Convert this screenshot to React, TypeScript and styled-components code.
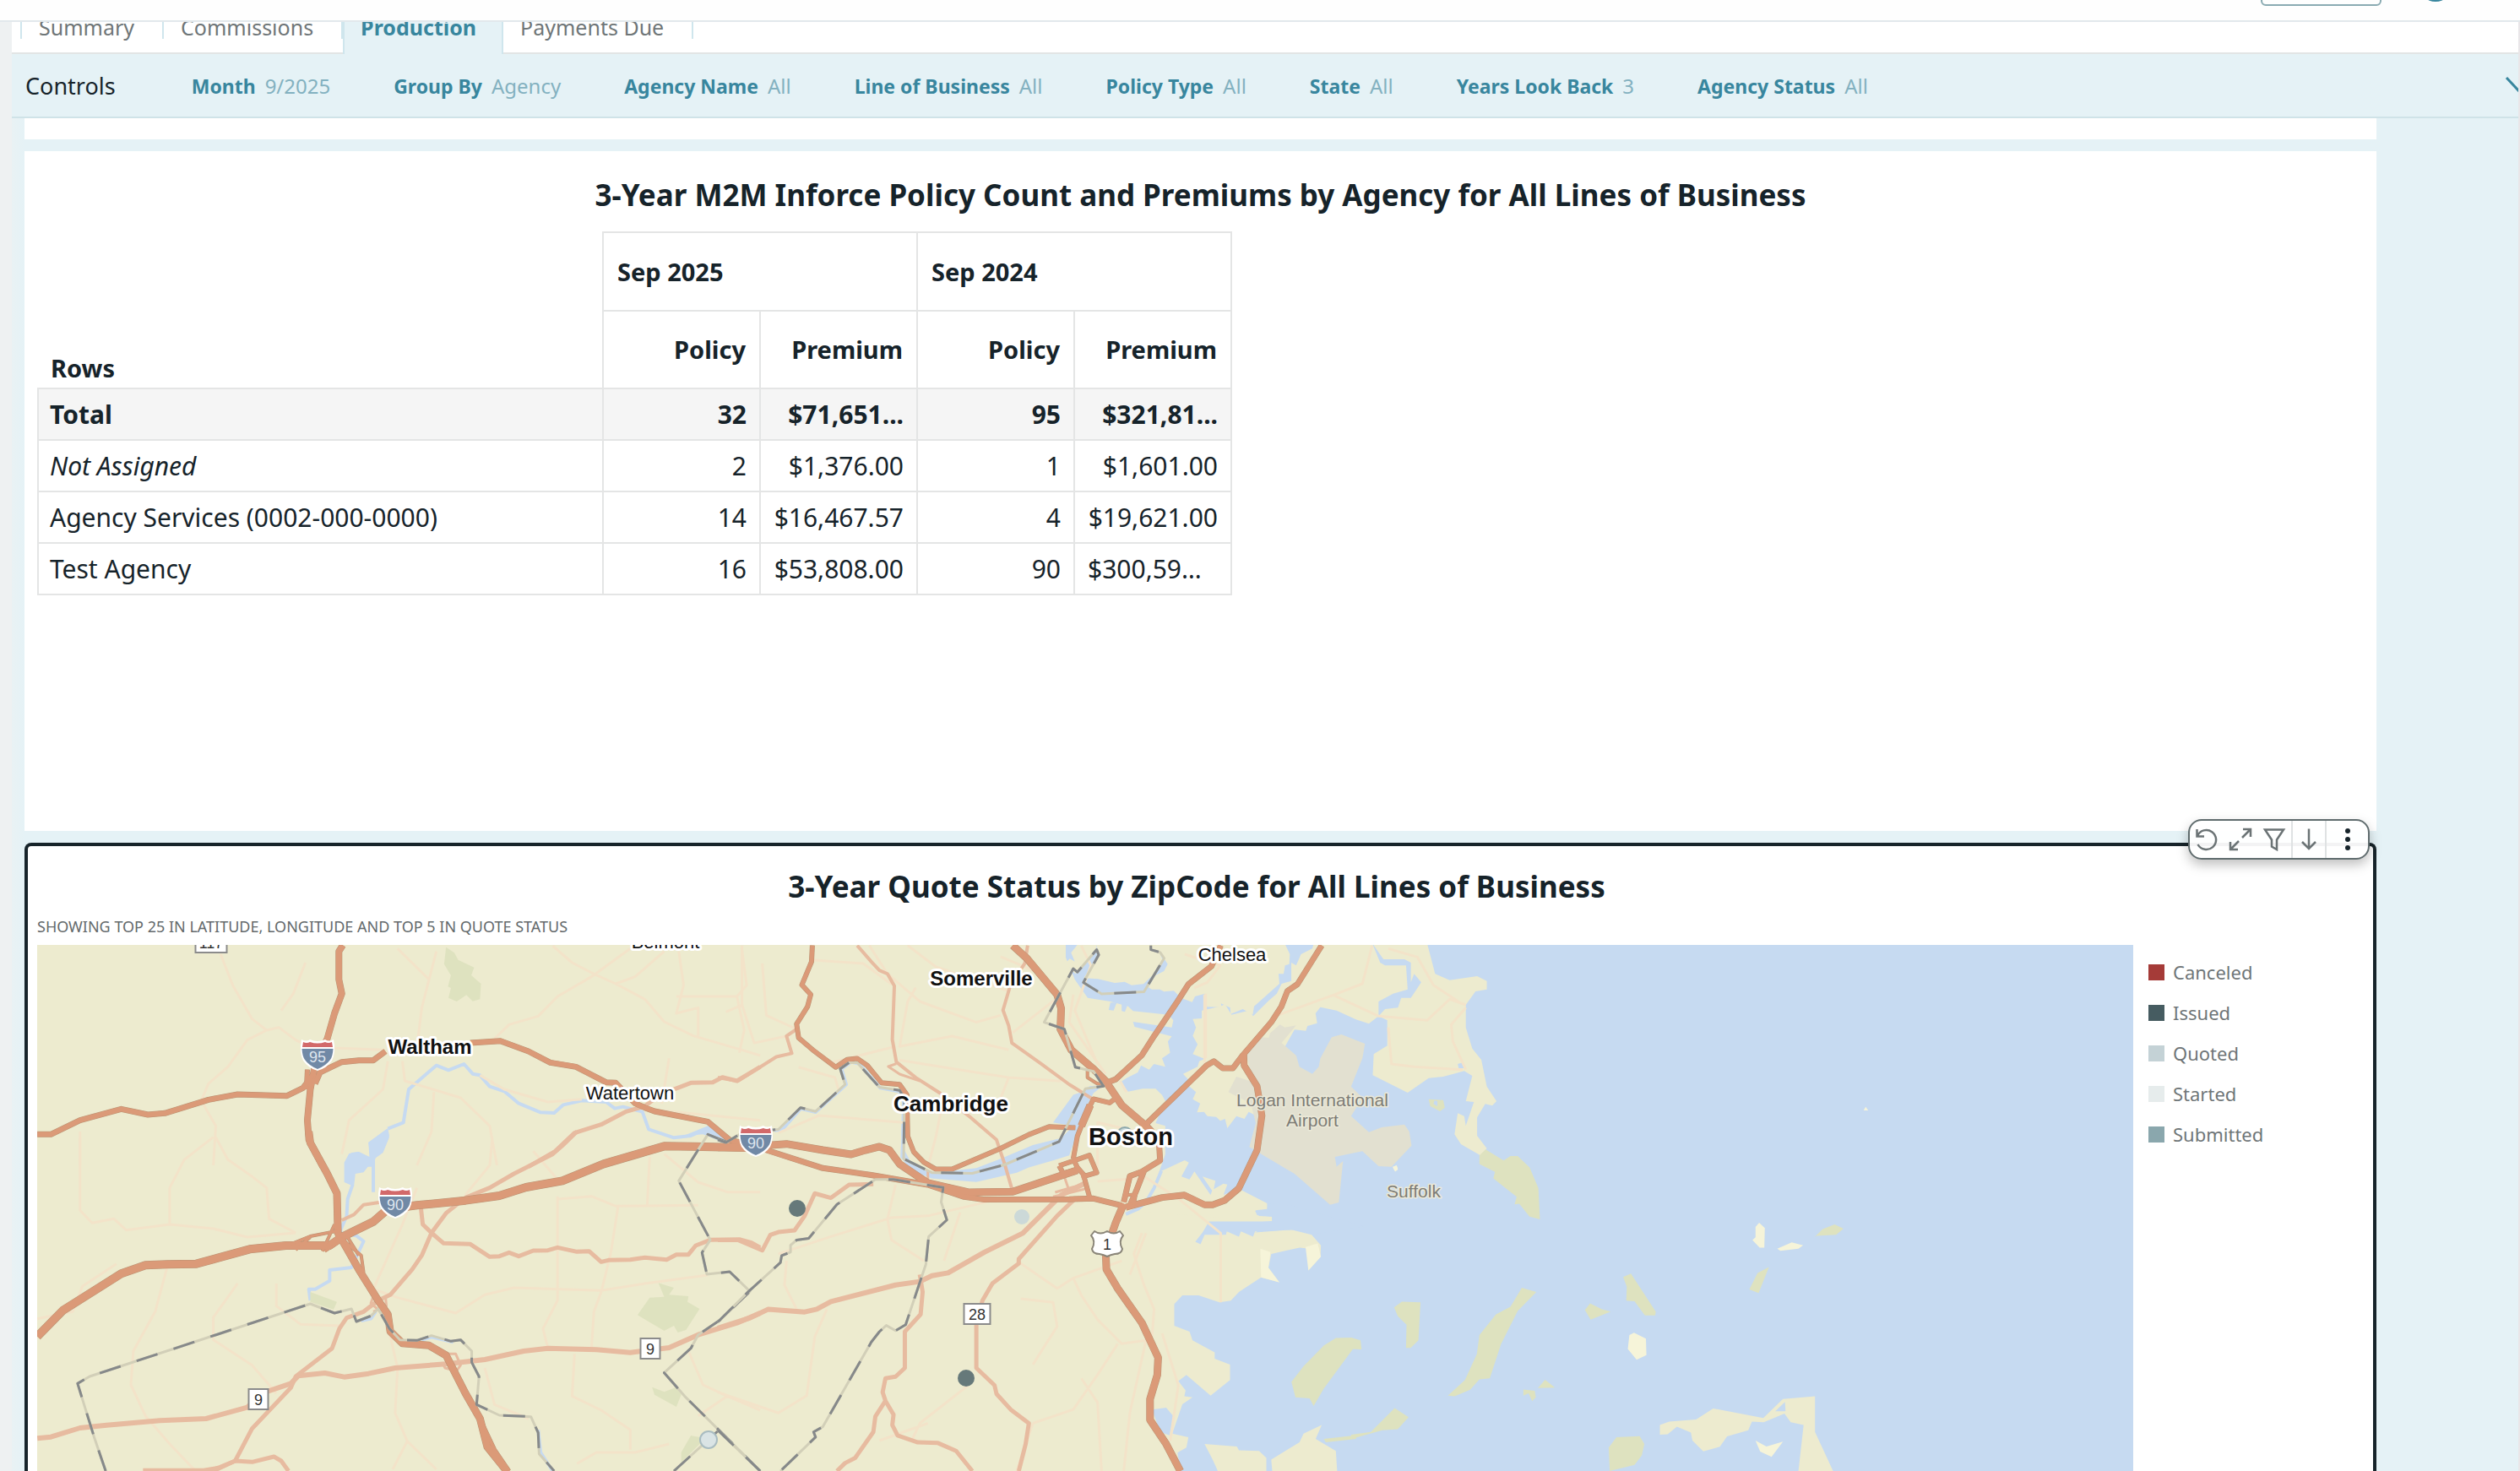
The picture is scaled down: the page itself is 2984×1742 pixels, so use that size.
import React from 'react';
import styled, { createGlobalStyle, css } from 'styled-components';

const ink = '#16232a';
const teal = '#38869e';
const muted = '#6f7678';
const canvas = '#e5f2f6';
const rule = '#e4e5e5';

const GlobalStyle = createGlobalStyle`
  * { box-sizing: border-box; }
  body { margin: 0; background: #fff; overflow: hidden; }
  button { font: inherit; color: inherit; background: none; border: 0; padding: 0; cursor: pointer; }
`;

const Page = styled.div`
  height: 100vh;
  display: flex;
  flex-direction: column;
  overflow: hidden;
  color: ${ink};
  font-family: 'Noto Sans', 'Open Sans', sans-serif;
`;

const TopBar = styled.header`
  flex: none;
  height: 26px;
  display: flex;
  align-items: flex-end;
  justify-content: flex-end;
  gap: 44px;
  padding: 0 80px 17px 0;
  border-bottom: 2px solid #e2e8ec;
  background: #fefefe;
  overflow: hidden;
`;

const TopButton = styled.button`
  width: 143px;
  height: 40px;
  border: 2px solid #8aabb2;
  border-radius: 6px;
`;

const Avatar = styled.span`
  width: 40px;
  height: 40px;
  margin-bottom: 5px;
  border-radius: 50%;
  background: ${teal};
`;

const Frame = styled.div`
  flex: 1;
  min-height: 0;
  display: flex;
  border-right: 2px solid #e9e6e8;
`;

const Rail = styled.div`
  flex: none;
  width: 14px;
  background: #eef1f2;
`;

const Sheet = styled.div`
  flex: 1;
  min-width: 0;
  display: flex;
  flex-direction: column;
`;

const Tabs = styled.nav`
  flex: none;
  height: 38px;
  display: flex;
  align-items: flex-end;
  padding-left: 10px;
  background: linear-gradient(#e2e5e5, #e2e5e5) bottom / 100% 2px no-repeat #fff;
  overflow: hidden;
`;

const Tab = styled.button<{ $active?: boolean; $first?: boolean }>`
  flex: none;
  height: 60px;
  padding: 0 35px 17px 20px;
  display: flex;
  align-items: flex-end;
  font-size: 25px;
  line-height: 30px;
  color: ${muted};
  background: linear-gradient(#cfe6ed, #cfe6ed) right 0 top 0 / 2px 42px no-repeat;
  ${p => p.$first && css`
    border-left: 2px solid transparent;
    border-image: linear-gradient(#cfe6ed 42px, transparent 42px) 1;
    border-width: 0 0 0 2px;
  `}
  ${p => p.$active && css`
    font-weight: 700;
    color: ${teal};
    background: ${canvas};
    border-right: 2px solid #cfe6ed;
    border-left: 2px solid #cfe6ed;
    padding-right: 30px;
    padding-left: 19px;
  `}
`;

const Controls = styled.section`
  flex: none;
  height: 76px;
  display: flex;
  align-items: center;
  gap: 75px;
  padding: 2px 0 0 16px;
  background: ${canvas};
  border-bottom: 2px solid #cfe3e8;
  overflow: hidden;
  position: relative;
`;

const ControlsTitle = styled.h2`
  margin: 0 15px 0 0;
  font-size: 27px;
  font-weight: 400;
  line-height: 36px;
`;

const ControlButton = styled.button`
  display: flex;
  align-items: baseline;
  gap: 11px;
  font-size: 24px;
  line-height: 32px;
  color: #83b1c0;
  white-space: nowrap;
`;

const ControlName = styled.strong`
  font-size: 23px;
  font-weight: 700;
  color: ${teal};
`;

const Collapse = styled.button`
  position: absolute;
  right: -16px;
  top: 24px;
  width: 32px;
  height: 24px;
  svg { display: block; }
`;

const Board = styled.main`
  flex: 1;
  min-height: 0;
  display: flex;
  flex-direction: column;
  gap: 14px;
  padding: 0 168px 0 15px;
  background: linear-gradient(90deg, #e9f2f4, ${canvas} 15px);
`;

const CardTail = styled.div`
  flex: none;
  height: 25px;
  background: #fff;
`;

const Card = styled.section`
  flex: none;
  height: 805px;
  padding: 27px 15px 0;
  background: #fff;
`;

const MapCard = styled.section`
  flex: 1;
  min-height: 0;
  display: flex;
  flex-direction: column;
  position: relative;
  padding: 23px 0 0 11px;
  background: #fff;
  border: 4px solid #17242a;
  border-bottom: 0;
  border-radius: 8px 8px 0 0;
`;

const CardTitle = styled.h1`
  margin: 0;
  font-size: 35px;
  font-weight: 700;
  line-height: 50px;
  text-align: center;
`;

const MapTitle = styled(CardTitle)`
  padding-right: 20px;
`;

const Pivot = styled.table`
  width: 1415px;
  margin-top: 18px;
  table-layout: fixed;
  border-collapse: collapse;
  font-size: 30px;
`;

const NameCol = styled.col` width: 669px; `;

const GroupHead = styled.th`
  height: 93px;
  padding: 0 16px;
  border: 2px solid ${rule};
  font-size: 29px;
  line-height: 40px;
  text-align: left;
`;

const ValueHead = styled(GroupHead)`
  height: 92px;
  text-align: right;
`;

const CornerHead = styled.th`
  padding: 0 15px 3px;
  vertical-align: bottom;
  font-size: 29px;
  line-height: 40px;
  text-align: left;
`;

const RowHead = styled.th<{ $kind?: string }>`
  height: 61px;
  padding: 0 13px;
  border: 2px solid ${rule};
  font-weight: ${p => (p.$kind === 'total' ? 700 : 400)};
  font-style: ${p => (p.$kind === 'empty' ? 'italic' : 'normal')};
  text-align: left;
  line-height: 40px;
`;

const Value = styled.td<{ $left?: boolean }>`
  padding: 0 15px;
  border: 2px solid ${rule};
  text-align: ${p => (p.$left ? 'left' : 'right')};
  line-height: 40px;
  white-space: nowrap;
`;

const PivotRow = styled.tr<{ $kind?: string }>`
  ${p => p.$kind === 'total' && css`
    font-weight: 700;
    background: #f5f5f5;
  `}
`;

const Note = styled.p`
  margin: 9px 0;
  font-size: 18px;
  line-height: 26px;
  color: #63696b;
`;

const MapRow = styled.div`
  flex: 1;
  min-height: 0;
  display: flex;
`;

const MapView = styled.svg`
  flex: 1;
  min-width: 0;
  height: 100%;
  display: block;
  path { vector-effect: non-scaling-stroke; stroke-linejoin: round; }
`;

const Legend = styled.ul`
  flex: none;
  width: 284px;
  margin: 0;
  padding: 8px 0 0 18px;
  list-style: none;
`;

const LegendItem = styled.li`
  height: 48px;
  display: flex;
  align-items: center;
  gap: 10px;
  font-size: 22px;
  line-height: 30px;
  color: ${muted};
`;

const Swatch = styled.span<{ $color: string }>`
  width: 19px;
  height: 19px;
  background: ${p => p.$color};
`;

const Toolbar = styled.div`
  position: absolute;
  top: -32px;
  right: 4px;
  height: 48px;
  display: flex;
  background: #fffffff2;
  border: 2px solid #5f6b6d;
  border-radius: 16px;
  box-shadow: 0 6px 14px #00000040;
`;

const ToolButton = styled.button<{ $wide?: boolean; $ruled?: boolean }>`
  width: ${p => (p.$wide ? 51 : 40)}px;
  display: flex;
  align-items: center;
  justify-content: center;
  border-left: ${p => (p.$ruled ? '2px solid #dfe2e3' : '0')};
  color: #6b7375;
`;

/* ---- map drawing ---- */

const Land = styled.path` fill: #edebcf; `;
const Sand = styled.path` fill: #f6f4d9; `;
const Water = styled.path` fill: #c6daf1; `;
const Airport = styled.path` fill: #e2e0d0; `;
const Park = styled.path` fill: #dee2bf; `;
const Stream = styled.path` fill: none; stroke: #c6daf1; stroke-width: 4px; `;
const Street = styled.path` fill: none; stroke: #f3e3c9; stroke-width: 3px; `;
const Secondary = styled.path<{ $w?: number }>` fill: none; stroke: #e7bba0; stroke-width: ${p => p.$w ?? 5}px; `;
const Casing = styled.path<{ $w: number }>` fill: none; stroke: #b99273; stroke-width: ${p => p.$w + 1}px; `;
const Highway = styled.path<{ $w: number }>` fill: none; stroke: #db9a78; stroke-width: ${p => p.$w}px; `;
const BorderBase = styled.path` fill: none; stroke: #d2cfb8; stroke-width: 3px; `;
const BorderDash = styled.path` fill: none; stroke: #86898a; stroke-width: 3px; stroke-dasharray: 26 20; `;

const Place = styled.text<{ $size: number; $bold?: boolean }>`
  font-family: 'Liberation Sans', Arial, sans-serif;
  font-size: ${p => p.$size}px;
  font-weight: ${p => (p.$bold ? 700 : 400)};
  text-anchor: middle;
  fill: #111;
  stroke: #fff;
  stroke-width: 6px;
  stroke-linejoin: round;
  paint-order: stroke;
`;

const SoftPlace = styled(Place)`
  fill: #7d7c76;
  stroke: #ebe9d8;
  stroke-width: 3px;
`;

const SignText = styled.text<{ $light?: boolean }>`
  font-family: 'Liberation Sans', Arial, sans-serif;
  font-size: 18px;
  text-anchor: middle;
  fill: ${p => (p.$light ? '#dfe6ef' : '#333')};
`;

const west = 'translate(0 980) scale(0.5741 0.33333)';
const southWest = 'translate(0 1340) scale(0.5741 0.33333)';
const centre = 'translate(850 1100) scale(0.47831 0.40945)';
const harbor = 'translate(1200 1100) scale(0.38265 0.33333)';
const mystic = 'translate(1240 1110) scale(0.33333)';
const east = 'translate(1600 1100) scale(0.61224 0.40945)';

type Line = { at: string; d: string; w: number };

const secondaries: Line[] = [
  { at: west, w: 5, d: 'M1090,1205L1145,1150L1185,1085L1240,1055L1290,1010L1330,990L1360,950L1425,907L1470,905L1490,887L1520,900L1568,850' },
  { at: southWest, w: 5, d: 'M1190,0L1160,50L1140,80L1060,150L1010,200L960,235L920,290L890,360L870,440L850,490L830,530L805,580L780,600L750,640L715,662L700,700L685,770L610,870L600,910L520,1055L485,1170L440,1206' },
  { at: southWest, w: 6, d: 'M77,1090L105,1085L165,1053L220,1043L330,1027L425,1020L510,980L540,930L600,895L615,868L670,858L710,872L760,860L815,840L925,825L1000,810L1080,780L1130,770L1230,775L1300,785L1380,768L1440,722L1520,680L1568,645' },
  { at: southWest, w: 5, d: 'M868,270L872,330L890,360L915,397L970,400L1010,445L1030,443L1050,430L1070,443L1100,423L1130,422L1150,412L1190,427L1215,425L1240,463L1255,457L1300,455L1330,448L1375,455L1395,437L1420,437L1435,405L1465,385L1525,383L1550,395L1568,412' },
  { at: southWest, w: 4, d: 'M705,315L730,295L750,260L790,250' },
  { at: southWest, w: 5, d: 'M295,1204L420,1204L450,1195L485,1170L520,1174L565,1155L580,1170L595,1206' },
  { at: southWest, w: 3, d: 'M770,585L765,610L785,640M795,585L797,620L770,640M925,790L940,790L950,830L940,855M912,820L918,840L940,850' },
  { at: centre, w: 4, d: 'M345,48L380,95L400,120L420,130L437,165L432,320L442,385L490,430L550,475L620,540L690,610L710,680L730,760' },
  { at: centre, w: 3, d: 'M442,390L422,398L450,420L500,440' },
  { at: centre, w: 4, d: 'M767,48L760,100L725,160L706,235L720,280L728,330L800,390L870,450L925,490' },
  { at: centre, w: 4, d: 'M0,430L50,440L145,370L183,360L170,310L195,290' },
  { at: centre, w: 5, d: 'M0,900L50,900L110,930L130,885L150,877L190,872L215,830L240,765L280,778L325,740L385,738' },
  { at: centre, w: 6, d: 'M0,1155L80,1125L125,1100L215,1108L245,1100L280,1078L440,1030L500,1020L530,1003L570,995L660,935L755,880L850,770L910,735' },
  { at: centre, w: 5, d: 'M885,780L840,830L745,955L745,968L680,1025L655,1075L652,1090' },
  { at: centre, w: 5, d: 'M640,1145L640,1270L685,1320L690,1345L725,1390L770,1430L762,1490L745,1568' },
  { at: centre, w: 5, d: 'M500,1000L507,1050L502,1115L463,1165L463,1270L440,1295L415,1300L408,1340L415,1365L435,1405L432,1435L445,1465L495,1485L545,1487L590,1510L630,1568' },
  { at: centre, w: 5, d: 'M415,1365L390,1410L385,1455L340,1530L315,1545L295,1568' },
  { at: centre, w: 3, d: 'M850,690L872,765M835,762L905,738M830,775L910,752M520,700L520,735' },
];

const highways: Line[] = [
  { at: west, w: 7, d: 'M707,418L699,440L699,540L705,590L690,660L675,750L650,840L640,930L634,1040L637,1110L666,1205' },
  { at: west, w: 5, d: 'M632,930L634,860' },
  { at: west, w: 6, d: 'M77,1090L105,1090L165,1040L250,1000L305,1020L340,1015L430,967L490,948L592,953L625,925L645,880' },
  { at: west, w: 6, d: 'M650,910L660,870L705,833L740,827L770,827L795,795' },
  { at: west, w: 6, d: 'M970,765L1032,758L1090,795L1135,835L1188,850L1250,905L1270,907L1310,980L1330,995L1350,1008L1460,1045L1505,1110L1530,1120' },
  { at: southWest, w: 9, d: 'M77,728L130,635L250,505L300,475L345,472L405,470L515,418L590,405L680,405L705,375L770,320L800,275L860,262L960,245L1030,228L1085,198L1160,175L1245,115L1370,52L1430,53L1530,57L1568,57' },
  { at: southWest, w: 8, d: 'M637,0L640,40L675,150L695,220L697,360L740,490L780,600L800,650L805,710L830,752L885,760L920,795L960,930L990,1020L1005,1120L1045,1206' },
  { at: southWest, w: 4, d: 'M990,1020L1020,1130L1050,1206' },
  { at: southWest, w: 3, d: 'M600,400L640,372L700,352M610,420L640,375M665,425L690,330M670,425L710,380M700,375L745,440L750,500M715,370L740,440' },
  { at: centre, w: 5, d: 'M234,48L232,95L208,162L230,190L222,225L195,275L200,315L235,350L292,400L320,378L345,375L370,395L405,445L450,450L468,480L470,600L485,645L510,675L540,695L580,695L640,665L700,635L770,595L820,572L885,575' },
  { at: centre, w: 8, d: 'M730,48L765,85L840,190L850,230L848,290L875,350L930,405L960,440L1000,510L1060,570L1092,610' },
  { at: centre, w: 6, d: 'M1060,570L1092,615L1095,670L1050,702L1020,715L1005,790M1055,700L1035,760L1020,800' },
  { at: centre, w: 8, d: 'M1005,795L985,850L970,900L960,930L962,985L990,1040L1050,1140L1090,1240L1088,1290L1070,1360L1070,1420L1110,1490L1145,1568' },
  { at: centre, w: 6, d: 'M1245,48L1222,108L1165,160L1135,215L1080,310L1050,365L985,435L962,445' },
  { at: centre, w: 6, d: 'M1495,48L1435,160L1410,180L1395,225L1370,270L1300,365L1275,403L1250,403L1228,383L1210,395L1060,565' },
  { at: centre, w: 7, d: 'M1302,360L1303,395L1335,455L1347,540L1335,640L1290,750L1255,785L1225,798L1205,798L1155,770L1100,777L1010,805' },
  { at: centre, w: 8, d: 'M0,632L100,628L170,622L260,640L330,652L365,640L400,630L425,640L450,680L520,735L620,762L730,760L890,698' },
  { at: centre, w: 6, d: 'M100,632L260,692L380,712L520,740L610,775L660,783L870,782L930,780L1000,800' },
  { at: centre, w: 5, d: 'M985,490L970,503L930,492L918,520L900,570L890,600L880,665M845,685L920,655L938,705L900,718M880,665L890,690L905,710L920,775M845,685L855,707L895,695' },
  { at: centre, w: 8, d: 'M922,510L900,570' },
  { at: centre, w: 3, d: 'M915,410L915,430L940,448L965,445M1012,770L1035,768L1030,800' },
];

const borders: Line[] = [
  { at: southWest, w: 3, d: 'M218,1206L195,1090L160,895L185,870L640,612L690,645L725,630L735,675L765,655L780,630L803,700L825,740L860,742L890,725L930,745L950,740L973,780L973,820L988,870L983,970L1030,1008L1095,1013L1110,1070L1112,1145L1143,1206' },
  { at: southWest, w: 3, d: 'M1500,38L1460,10L1400,175L1465,385L1448,430L1458,507L1505,498L1547,568L1485,670L1440,722L1425,770L1370,857L1412,940L1568,1206' },
  { at: southWest, w: 3, d: 'M1390,1206L1480,1065' },
  { at: centre, w: 3, d: 'M0,1450L105,1568' },
  { at: centre, w: 3, d: 'M0,1137L75,1050L155,965L158,945L180,935L180,915L195,900L225,895L295,797L390,725L435,725L558,748L553,790L567,842L522,890L515,970L465,1145L440,1162L417,1147L400,1165L380,1195L260,1440L237,1455L242,1470L155,1568' },
  { at: centre, w: 3, d: 'M0,610L20,618L60,590L150,580L205,517L242,528L315,450L303,405L325,387L345,387L400,458L450,467L462,490L460,665L530,705L630,707L710,682L845,615L910,462L955,455L930,412L885,400L858,290L808,270L880,115L890,125L938,60L943,75L905,155L950,188L1055,182L1105,85L1095,68L1072,60L1072,48' },
];

const streets: { at: string; d: string }[] = [
  { at: west, d: 'M455,450L480,560L520,680L550,720L575,710L610,755L640,780L790,790M630,480L605,590L580,650M550,720L510,755L470,850L430,910L415,970L445,1060L440,1200M820,430L885,540L870,640L860,780M900,440L885,540M1020,750L1050,700L1110,670L1150,600L1220,530L1300,430M1140,420L1180,480L1225,520L1270,555L1310,530L1370,440M1270,555L1330,610L1370,690L1430,740L1530,790L1568,810M1400,440L1410,560L1395,660L1440,640L1440,740M1395,600L1520,600L1540,560L1530,430M1520,600L1535,720L1525,800M800,830L790,930L720,1040L705,1160M830,830L835,900L950,960L1010,1060L1025,1200M895,940L890,1080L860,1200M990,880L1040,930L1130,975L1200,965M165,1080L165,1200M1380,820L1365,980M1330,1000L1568,1040' },
  { at: southWest, d: 'M165,20L165,280L190,325L235,310L260,350L350,330L440,345L510,375L610,360M445,20L470,100L520,160L550,200L555,310L610,360M440,20L380,100L350,200L350,330M345,480L320,640L275,780L270,900L300,1010L350,1110L400,1200M240,470L170,550L150,640L77,665M490,540L440,660L440,740L520,830L570,930M570,540L570,620L620,685L700,690M860,200L830,330L770,560L820,590L940,645L1000,580L1060,555L1240,565L1330,540L1460,510M1150,230L1150,430L1150,600L1120,700L1130,770M1150,240L1220,230L1270,265L1440,262M1275,265L1260,430L1240,570L1225,640L1220,770M1015,30L1010,120L960,225M1100,70L1150,170M1340,90L1335,260M1370,80L1440,180L1500,215L1568,215M1185,790L1180,940L1240,990L1300,1060L1300,1130M1420,780L1450,900L1500,940L1440,1010M1500,940L1568,990M800,690L820,840L815,1000L840,1100L810,1200M840,1100L900,1200M1000,840L1020,970L1090,1020M1380,1110L1310,1140L1230,1140L1190,1180' },
  { at: centre, d: 'M60,48L60,220L90,330L170,310M60,220L20,240M110,100L120,250L195,290M230,90L360,100L430,160M375,48L420,130L500,210L640,270L700,250M470,48L540,110L720,180M490,170L470,210L450,340L580,310L720,350M270,390L440,340M450,380L720,430L850,440M200,400L290,430L300,470M560,480L540,600L520,690M720,430L690,520L610,530M150,590L250,540L460,560M700,80L800,130L840,200L730,300M880,190L870,270L960,420M150,940L280,890L430,835L520,830L700,780M440,740L420,840L430,900L510,960M170,960L165,1030L195,1100M270,1100L240,1180L220,1350L150,1400L0,1340M600,820L560,960M740,960L840,1040L880,1010L1000,960M880,1010L900,1060L940,1130L1000,1200L1060,1190M750,1070L830,1080L840,1150L780,1260M990,1200L940,1290L880,1390L780,1430M620,1320L500,1430L480,1480M1050,880L1030,940L1055,1030L1080,1100L1075,1180M1060,1190L1020,1400L1005,1568M900,1300L940,1370L950,1568M780,1430L740,1568M1100,1170L1140,1320L1120,1480M1205,190L1205,400M940,730L1060,720L1140,780L1245,880L1245,1080M940,700L940,560L1090,600M1060,880L1020,1000M400,1480L520,1430' },
  { at: harbor, d: 'M810,310L990,235L1080,195L1110,60M990,235L1130,310L1280,325L1350,250L1400,270M1160,70L1250,100L1300,200L1380,260M1160,350L1170,480L1240,490L1390,500M1400,280L1355,340L1360,400L1400,500M595,230L595,460M530,90L640,130L600,190L560,210M210,60L240,130L190,290L260,480M330,540L350,580' },
];

function Shield({ x, y, label }: { x: number; y: number; label: string }) {
  return (
    <g transform={`translate(${x} ${y})`}>
      <path d="M-19,-17Q-13,-14 -9,-17Q0,-13 9,-17Q13,-14 19,-17Q22,-2 17,8Q11,17 0,20Q-11,17 -17,8Q-22,-2 -19,-17Z" fill="#fff" />
      <path d="M-17,-14Q-13,-12 -9,-14Q0,-11 9,-14Q13,-12 17,-14L18,-8H-18Z" fill="#d2696a" />
      <path d="M-18.500,-6H18.500Q18,3 15,7Q10,14 0,18Q-10,14 -15,7Q-18,3 -18.500,-6Z" fill="#7189a6" />
      <SignText $light y="10">{label}</SignText>
    </g>
  );
}

function RouteSign({ x, y, w, label }: { x: number; y: number; w: number; label: string }) {
  return (
    <g transform={`translate(${x} ${y})`}>
      <rect x={-w / 2} y="-12" width={w} height="24" fill="#fff" stroke="#8b8b8b" strokeWidth="2" />
      <SignText y="7">{label}</SignText>
    </g>
  );
}

function BostonMap() {
  return (
    <MapView viewBox="44 1119 2482 600" preserveAspectRatio="xMinYMin meet" role="img" aria-label="Quote status by zip code around Boston">
      <rect x="44" y="1119" width="2482" height="900" fill="#edebcf" />
      <rect x="1262" y="1119" width="1264" height="900" fill="#c6daf1" />

      <g transform={harbor}>
        {/* Charlestown and Boston */}
        <Land d="M-100,50L145,50L165,110L190,180L230,245L300,258L355,275L370,292L480,305L495,325L490,350L370,330L375,348L490,382L478,400L485,440L460,460L470,490L435,480L420,500L395,485L385,510L350,530L330,545L355,578L400,568L440,568L460,590L475,622L455,650L440,690L470,700L470,800L440,900L440,870L530,822L543,830L520,880L545,890L560,862L610,945L615,930L585,880L625,895L620,925L650,905L662,908L650,945L700,925L785,975L785,995L750,1000L760,1020L800,1022L800,1038L610,1040L570,1095L575,1120L600,1080L645,1072L650,1095L660,1075L700,1077L705,1095L720,1072L745,1072L748,1082L740,1150L480,1220L300,1990L-100,1990Z" />
        {/* piers in the channel */}
        <Water d="M300,262L320,262L310,290L295,288ZM335,262L355,265L345,295L335,292Z" />
        {/* East Boston */}
        <Land d="M555,320L583,318L583,290L640,275L655,268L675,305L728,290L742,310L790,255L815,230L830,195L860,185L860,120L875,130L890,90L925,70L930,50L1110,50L1135,120L1150,130L1215,130L1220,215L1175,230L1130,258L1130,310L1100,337L1060,322L1000,290L950,278L935,300L940,335L910,345L905,362L870,358L800,500L780,640L745,660L728,650L715,675L690,665L662,708L655,675L640,682L628,668L600,665L590,650L568,652L578,620L555,605L565,580L540,555L545,540L525,515L570,490L575,470L592,462L555,445L570,410L555,380L565,350Z" />
        {/* Winthrop and Deer Island */}
        <Land d="M1110,50L1280,50L1305,160L1350,182L1435,168L1465,185L1465,215L1430,222L1400,270L1400,350L1420,425L1448,465L1465,560L1495,612L1482,628L1460,622L1435,670L1435,735L1465,780L1445,805L1385,765L1365,730L1375,655L1395,665L1400,700L1425,615L1400,612L1420,522L1395,505L1330,525L1285,530L1220,582L1112,520L1115,445L1157,415L1157,325L1130,310L1150,285L1190,280L1200,245L1230,245L1262,190L1240,160L1230,190L1230,120L1210,108L1145,108Z" />
        <Water d="M1375,480L1390,475L1395,495L1378,495Z" />
        <Airport d="M765,385L790,387L795,370L825,340L840,350L875,343L830,405L875,450L885,490L925,515L945,490L950,460L985,385L1015,375L1088,408L1080,460L1045,560L1080,600L1045,665L1100,722L1140,705L1210,695L1225,720L1232,770L1170,845L1130,843L1080,790L995,810L1000,845L1020,825L1007,972L980,980L870,870L730,775L750,690L735,620L665,580L690,525L745,545L720,450Z" />
        <Park d="M1285,605L1330,608L1335,635L1320,648L1290,630Z" />
        <Water d="M1303,610L1312,612L1312,630L1300,622Z" />
        <Sand d="M1175,850L1185,840L1190,855L1182,862Z" />
      </g>

      <g transform={mystic}>
        {/* Everett and Chelsea */}
        <Land d="M112,20L175,20L175,45L100,130L84,112L65,92L80,76L98,86L85,55Z" />
        <Land d="M172,20L185,60L130,145L180,148L240,162L275,158L300,170L340,166L372,185L400,185L415,193L450,190L475,215L515,230L525,210L560,200L568,247L620,248L617,235L650,250L652,272L695,255L730,275L735,245L825,165L822,130L840,130L845,100L860,95L862,60L843,20Z" />
        <Water d="M398,52L415,75L428,95L415,120L385,135L352,190L340,168L380,130L412,85Z" />
      </g>

      <g transform={centre}>
        <Land d="M860,800L1380,848L1330,878L1420,870L1470,885L1493,915L1492,948L1462,988L1465,925L1440,922L1370,940L1363,980L1390,1022L1345,1008L1290,1050L1270,1075L1242,1080L1190,1060L1150,1060L1130,1085L1130,1148L1168,1165L1175,1190L1230,1225L1230,1243L1268,1260L1268,1305L1220,1350L1160,1290L1140,1308L1158,1335L1155,1352L1175,1355L1150,1375L1125,1460L1165,1470L1160,1500L1138,1515L1150,1600L860,1600Z" />
        <Sand d="M1343,925L1368,935L1363,980L1390,1022L1345,1008ZM1455,920L1485,910L1493,948L1462,988Z" />
        <Water d="M1182,905L1200,878L1216,846L1375,846L1372,832L1335,828L1330,815L1360,812L1365,795L1420,800L1600,860L1480,882L1430,870L1330,875L1325,890L1295,875L1290,890L1260,875L1258,885L1205,885L1195,912ZM1075,1390L1110,1385L1128,1410L1118,1465L1095,1455Z" />
        {/* Squantum */}
        <Land d="M1205,1490L1285,1497L1290,1508L1340,1510L1358,1530L1358,1600L1250,1600L1225,1535ZM1375,1600L1370,1535L1440,1485L1450,1460L1495,1435L1480,1475L1530,1510L1535,1600Z" />
        {/* Charles River */}
        <Water d="M456,560L462,640L480,680L540,705L640,692L700,665L780,625L850,605L880,570L895,480L920,455L955,452L930,475L910,520L890,590L870,655L830,670L770,690L740,705L640,732L530,722L480,700L452,660ZM830,560L880,480L905,470L880,570Z" />
        <Stream d="M140,583L160,580L205,520L242,530L318,450L306,405L330,385L350,390L402,460L450,470L460,500L458,600M1098,700L1080,750L1060,790L1040,810L1010,825" />
      </g>

      <g transform={west}>
        <Stream d="M800,1070L832,1048L843,930L900,845L925,862L957,840L975,875L990,880L1010,920L1040,937L1070,980L1115,1012L1143,1014L1162,985L1200,970L1250,975L1268,998L1285,992L1325,1010L1338,1072L1390,1102L1425,1095L1460,1068L1500,1120" />
        <Water d="M800,1068L803,1095L775,1170L770,1205L712,1205L725,1155L740,1152L762,1172L760,1118ZM1410,1095L1460,1060L1480,1085L1500,1125L1450,1090Z" />
        <Park d="M920,425L937,445L945,470L978,497L972,525L992,555L990,610L975,617L962,595L942,618L925,605L930,570L924,565L930,525L916,485Z" />
      </g>
      <g transform={southWest}>
        <Water d="M770,100L750,145L733,150L730,195L710,180L710,110L720,78L740,72L765,92L760,40L795,-5L803,20L790,75Z" />
        <Stream d="M727,190L717,240L715,300L700,360L735,370L750,390L725,483L680,492L680,530L650,560L637,560L640,600M770,90L770,215M745,672L765,665L775,640M870,740L890,730L935,748M1110,1060L1115,1140L1140,1206" />
        <Park d="M640,570L695,605L688,632L640,605ZM1358,538L1390,555L1380,580L1420,585L1418,605L1443,630L1415,705L1398,714L1390,690L1370,708L1315,652L1340,590L1370,587ZM1345,908L1370,925L1395,908L1405,935L1395,978L1350,935ZM1425,1080L1455,1090L1405,1175L1405,1140Z" />
      </g>

      <g transform={east}>
        <Park d="M260,638L295,670L308,657L322,657L345,690L362,750L365,840L345,832L325,795L316,797L320,775L275,722L278,703L248,680L248,655ZM83,1095L98,1078L134,1080L130,1190L115,1212L106,1212L107,1145L90,1120ZM0,1182L18,1190L20,1216L0,1215ZM330,1038L358,1050L322,1105L290,1200L268,1300L248,1303L230,1333L200,1352L187,1350L220,1305L243,1230L248,1175L280,1115L308,1093ZM452,1102L462,1083L485,1100L502,1107L463,1130ZM526,1007L541,997L589,1107L588,1118L568,1118L548,1077L532,1075L533,1035ZM786,995L808,978L788,1053L770,1043ZM895,893L912,868L935,855L952,867L938,885L900,888ZM375,1304L394,1327L361,1328ZM333,1332L355,1336L357,1355L350,1366L343,1343L333,1350ZM84,1386L111,1412L90,1447L60,1450L0,1475L0,1463L38,1455ZM513,1470L558,1467L567,1490L562,1523L548,1550L500,1568L498,1500Z" />
        <Sand d="M782,862L789,850L800,865L799,922L790,922L776,900L782,892ZM824,925L852,907L874,915L865,925L830,931ZM538,1175L547,1168L570,1185L571,1233L552,1246L535,1215ZM782,1480L803,1497L835,1483L813,1527L791,1512ZM991,525L995,515L1000,525ZM80,688L88,684L90,693L85,702Z" />
        <Land d="M597,1435L615,1425L667,1419L700,1387L797,1415L835,1360L897,1352L897,1455L932,1568L960,1640L860,1640L865,1568L875,1435L850,1427L838,1402L798,1427L775,1425L768,1450L727,1468L713,1498L681,1511L660,1480L657,1457L630,1440L612,1462L597,1463Z" />
        <Water d="M820,1395L839,1368L840,1395Z" />
      </g>
      <g transform={centre}>
        <Park d="M1500,1205L1530,1183L1568,1182L1585,1195L1500,1330L1475,1380L1465,1358L1430,1355L1420,1310L1450,1265ZM1500,1475L1580,1465L1580,1475L1505,1485Z" />
      </g>

      {streets.map((s, i) => <g key={i} transform={s.at}><Street d={s.d} /></g>)}
      {secondaries.map((s, i) => <g key={i} transform={s.at}><Secondary $w={s.w} d={s.d} /></g>)}
      {highways.map((s, i) => <g key={i} transform={s.at}><Casing $w={s.w} d={s.d} /></g>)}
      {highways.map((s, i) => <g key={i} transform={s.at}><Highway $w={s.w} d={s.d} /></g>)}
      {borders.map((s, i) => <g key={i} transform={s.at}><BorderBase d={s.d} /><BorderDash d={s.d} /></g>)}

      <Shield x={376} y={1248} label="95" />
      <Shield x={468} y={1423} label="90" />
      <Shield x={895} y={1350} label="90" />
      <RouteSign x={250} y={1116} w={37} label="117" />
      <RouteSign x={306} y={1657} w={23} label="9" />
      <RouteSign x={770} y={1597} w={23} label="9" />
      <RouteSign x={1157} y={1556} w={31} label="28" />
      <g transform="translate(1311 1472)">
        <path d="M-15,-14Q-8,-9 0,-14Q8,-9 15,-14L19,-9Q13,-2 18,7Q17,13 9,13Q4,14 0,16Q-4,14 -9,13Q-17,13 -18,7Q-13,-2 -19,-9Z" fill="#fff" stroke="#8a8578" strokeWidth="2" />
        <SignText y="8">1</SignText>
      </g>

      <circle cx="944" cy="1431" r="10" fill="#66797a" />
      <circle cx="1144" cy="1632" r="10" fill="#66797a" />
      <circle cx="1210" cy="1441" r="9" fill="#ccd9d8" />
      <circle cx="1332" cy="1344" r="9" fill="#c8d6d6" stroke="#8ea9ad" strokeWidth="2" />
      <circle cx="839" cy="1705" r="10" fill="#dae4e5" stroke="#a9bcc1" strokeWidth="2" />

      <Place $size={22} x="788" y="1123">Belmont</Place>
      <Place $size={24} $bold x="509" y="1248">Waltham</Place>
      <Place $size={22} x="746" y="1302">Watertown</Place>
      <Place $size={24} $bold x="1162" y="1167">Somerville</Place>
      <Place $size={26} $bold x="1126" y="1316">Cambridge</Place>
      <Place $size={29} $bold x="1339" y="1356">Boston</Place>
      <Place $size={22} x="1459" y="1138">Chelsea</Place>
      <SoftPlace $size={21} x="1554" y="1310">Logan International</SoftPlace>
      <SoftPlace $size={21} x="1554" y="1334">Airport</SoftPlace>
      <SoftPlace $size={21} x="1674" y="1418">Suffolk</SoftPlace>
    </MapView>
  );
}

const controls = [
  ['Month', '9/2025'], ['Group By', 'Agency'], ['Agency Name', 'All'], ['Line of Business', 'All'],
  ['Policy Type', 'All'], ['State', 'All'], ['Years Look Back', '3'], ['Agency Status', 'All'],
];

const rows = [
  { name: 'Total', kind: 'total', values: ['32', '$71,651...', '95', '$321,81...'] },
  { name: 'Not Assigned', kind: 'empty', values: ['2', '$1,376.00', '1', '$1,601.00'] },
  { name: 'Agency Services (0002-000-0000)', values: ['14', '$16,467.57', '4', '$19,621.00'] },
  { name: 'Test Agency', values: ['16', '$53,808.00', '90', '$300,59…'] },
];

const statuses = [
  ['Canceled', '#a53b38'], ['Issued', '#465c61'], ['Quoted', '#c4d2d6'], ['Started', '#e6ecec'], ['Submitted', '#8aa7ad'],
];

export default function App() {
  return (
    <Page>
      <GlobalStyle />
      <TopBar>
        <TopButton type="button" aria-label="Options" />
        <Avatar />
      </TopBar>
      <Frame>
        <Rail />
        <Sheet>
          <Tabs>
            <Tab type="button" $first>Summary</Tab>
            <Tab type="button">Commissions</Tab>
            <Tab type="button" $active>Production</Tab>
            <Tab type="button">Payments Due</Tab>
          </Tabs>
          <Controls>
            <ControlsTitle>Controls</ControlsTitle>
            {controls.map(([name, value]) => (
              <ControlButton type="button" key={name}>
                <ControlName>{name}</ControlName>
                <span>{value}</span>
              </ControlButton>
            ))}
            <Collapse type="button" aria-label="Expand controls">
              <svg width="32" height="24" viewBox="0 0 32 24" fill="none" stroke={teal} strokeWidth="3"><path d="M2 4l14 15L30 4" /></svg>
            </Collapse>
          </Controls>
          <Board>
            <CardTail />
            <Card>
              <CardTitle>3-Year M2M Inforce Policy Count and Premiums by Agency for All Lines of Business</CardTitle>
              <Pivot>
                <colgroup><NameCol /><col /><col /><col /><col /></colgroup>
                <thead>
                  <tr>
                    <CornerHead rowSpan={2} scope="col">Rows</CornerHead>
                    <GroupHead colSpan={2} scope="colgroup">Sep 2025</GroupHead>
                    <GroupHead colSpan={2} scope="colgroup">Sep 2024</GroupHead>
                  </tr>
                  <tr>
                    <ValueHead scope="col">Policy</ValueHead>
                    <ValueHead scope="col">Premium</ValueHead>
                    <ValueHead scope="col">Policy</ValueHead>
                    <ValueHead scope="col">Premium</ValueHead>
                  </tr>
                </thead>
                <tbody>
                  {rows.map(r => (
                    <PivotRow key={r.name} $kind={r.kind}>
                      <RowHead scope="row" $kind={r.kind}>{r.name}</RowHead>
                      {r.values.map((v, i) => <Value key={i} $left={v.endsWith('…')}>{v}</Value>)}
                    </PivotRow>
                  ))}
                </tbody>
              </Pivot>
            </Card>
            <MapCard>
              <MapTitle>3-Year Quote Status by ZipCode for All Lines of Business</MapTitle>
              <Note>SHOWING TOP 25 IN LATITUDE, LONGITUDE AND TOP 5 IN QUOTE STATUS</Note>
              <MapRow>
                <BostonMap />
                <Legend>
                  {statuses.map(([label, color]) => (
                    <LegendItem key={label}><Swatch $color={color} />{label}</LegendItem>
                  ))}
                </Legend>
              </MapRow>
              <Toolbar>
                <ToolButton type="button" aria-label="Undo">
                  <svg width="28" height="28" viewBox="0 0 28 28" fill="none" stroke="currentColor" strokeWidth="2.500"><path d="M2.500 2v8.500H11M3 10A11.500 11.500 0 1 1 3.500 20" /></svg>
                </ToolButton>
                <ToolButton type="button" aria-label="Maximize">
                  <svg width="28" height="28" viewBox="0 0 28 28" fill="none" stroke="currentColor" strokeWidth="2.500"><path d="M17 2h9v9M26 2L16 12M11 26H2v-9M2 26l10-10" /></svg>
                </ToolButton>
                <ToolButton type="button" aria-label="Filter">
                  <svg width="28" height="28" viewBox="0 0 28 28" fill="none" stroke="currentColor" strokeWidth="2.500"><path d="M3 2.500h22L17 14.500V26l-6-3.500v-8z" /></svg>
                </ToolButton>
                <ToolButton type="button" aria-label="Drill down" $ruled>
                  <svg width="28" height="28" viewBox="0 0 28 28" fill="none" stroke="currentColor" strokeWidth="2.500"><path d="M14 1.500V25M6 17l8 8 8-8" /></svg>
                </ToolButton>
                <ToolButton type="button" aria-label="Menu" $ruled $wide>
                  <svg width="8" height="28" viewBox="0 0 8 28" fill={ink}><circle cx="4" cy="4" r="3" /><circle cx="4" cy="14" r="3" /><circle cx="4" cy="24" r="3" /></svg>
                </ToolButton>
              </Toolbar>
            </MapCard>
          </Board>
        </Sheet>
      </Frame>
    </Page>
  );
}
